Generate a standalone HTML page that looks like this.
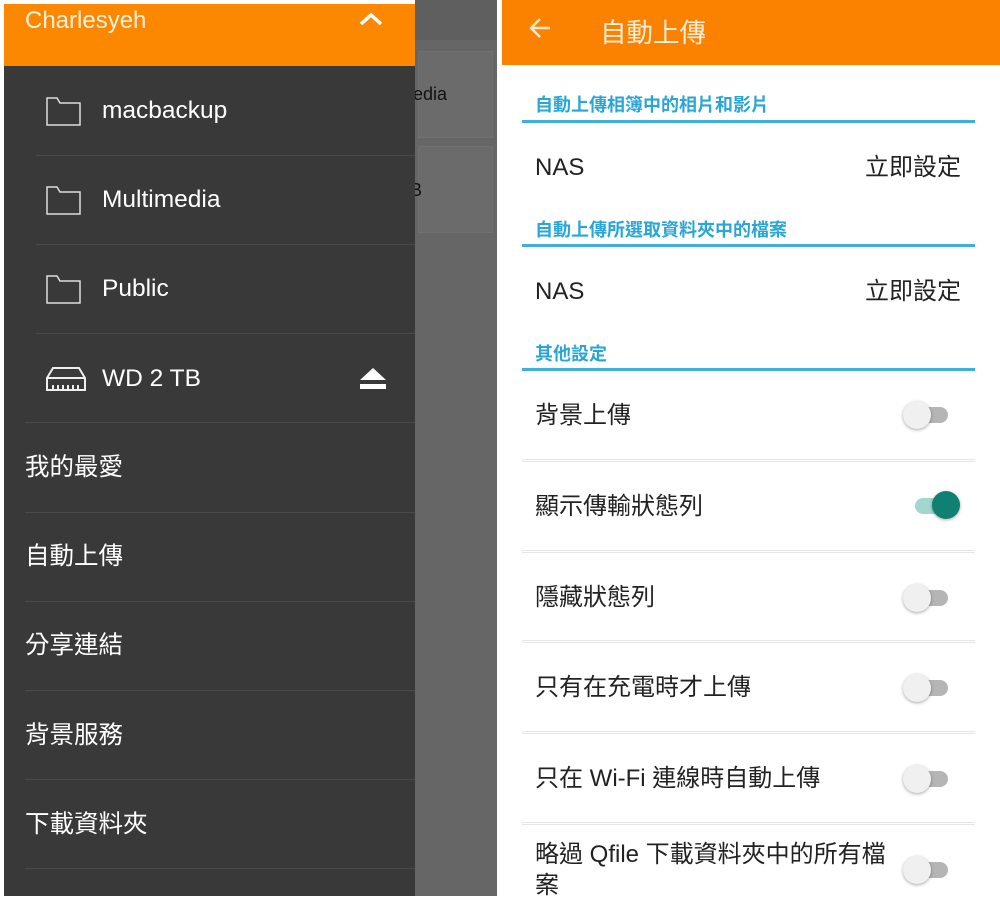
<!DOCTYPE html>
<html><head><meta charset="utf-8"><style>
*{margin:0;padding:0;box-sizing:border-box}
body{width:1000px;height:900px;background:#fff;position:relative;overflow:hidden;font-family:"Liberation Sans","Noto Sans CJK TC",sans-serif}
.a{position:absolute;white-space:nowrap}
.lt{color:#fff;font-size:24.5px;line-height:30px}
.sep{position:absolute;height:1px;background:#4a4a4a}
.bl{position:absolute;left:535px;color:#2aa6d6;font-size:18px;font-weight:bold;line-height:22px;white-space:nowrap}
.bline{position:absolute;left:522px;width:453px;height:3px;background:#3fb0dc}
.rt{position:absolute;left:535px;color:#222;font-size:24px;line-height:30px;white-space:nowrap}
.rsep{position:absolute;left:522px;width:453px;height:3px;border-top:1px solid #e6e6e6;border-bottom:1px solid #e6e6e6}
.tr{position:absolute;width:40px;height:16px;border-radius:8px;background:#b5b5b5;left:908px}
.kn{position:absolute;width:28px;height:28px;border-radius:50%;background:#f0f0f0;box-shadow:0 1px 3px rgba(0,0,0,.35);left:903px}
</style></head><body>
<div class="a" style="left:415px;top:0;width:82px;height:896px;background:#666"></div>
<div class="a" style="left:415px;top:0;width:82px;height:40px;background:#5f5f5f"></div>
<div class="a" style="left:418px;top:51px;width:75px;height:87px;background:#6b6b6b;border:1px solid #707070"></div>
<div class="a" style="left:418px;top:146px;width:75px;height:87px;background:#6b6b6b;border:1px solid #707070"></div>
<div class="a" style="left:413px;top:84px;color:#111;font-size:18px">edia</div>
<div class="a" style="left:410px;top:180px;color:#111;font-size:18px">B</div>
<div class="a" style="left:4px;top:4px;width:411px;height:892px;background:#393939"></div>
<div class="a" style="left:4px;top:4px;width:411px;height:62px;background:#fb8800"></div>
<div class="a" style="left:25px;top:7px;color:#fdf0dc;font-size:24px">Charlesyeh</div>
<svg class="a" style="left:358px;top:11px" width="26" height="16"><path d="M3 13 L13 4 L23 13" stroke="#fff" stroke-width="3.5" fill="none"/></svg>
<svg class="a" style="left:46px;top:97px" width="36" height="30"><path d="M1 1 H11 L14 6 H34 V28 H1 Z" stroke="#ddd" stroke-width="1.5" fill="none"/></svg>
<div class="a lt" style="left:102px;top:96px">macbackup</div>
<svg class="a" style="left:46px;top:186px" width="36" height="30"><path d="M1 1 H11 L14 6 H34 V28 H1 Z" stroke="#ddd" stroke-width="1.5" fill="none"/></svg>
<div class="a lt" style="left:102px;top:185px">Multimedia</div>
<svg class="a" style="left:46px;top:275px" width="36" height="30"><path d="M1 1 H11 L14 6 H34 V28 H1 Z" stroke="#ddd" stroke-width="1.5" fill="none"/></svg>
<div class="a lt" style="left:102px;top:274px">Public</div>
<svg class="a" style="left:45px;top:366px" width="42" height="26"><path d="M8 2 H34 L40 12 V24 H2 V12 Z M2 12 H40 M8 24 V19 M13 24 V19 M18 24 V19 M23 24 V19 M28 24 V19 M33 24 V19" stroke="#eee" stroke-width="2" fill="none"/></svg>
<div class="a lt" style="left:102px;top:364px">WD 2 TB</div>
<svg class="a" style="left:359px;top:367px" width="28" height="24"><path d="M14 1 L27 13 H1 Z" fill="#fff"/><rect x="1" y="17" width="26" height="5" fill="#fff"/></svg>
<div class="sep" style="left:36px;top:155px;width:379px"></div>
<div class="sep" style="left:36px;top:244px;width:379px"></div>
<div class="sep" style="left:36px;top:333px;width:379px"></div>
<div class="sep" style="left:25px;top:422px;width:390px"></div>
<div class="a lt" style="left:25px;top:453px">我的最愛</div>
<div class="sep" style="left:25px;top:512px;width:390px"></div>
<div class="a lt" style="left:25px;top:542px">自動上傳</div>
<div class="sep" style="left:25px;top:601px;width:390px"></div>
<div class="a lt" style="left:25px;top:631px">分享連結</div>
<div class="sep" style="left:25px;top:690px;width:390px"></div>
<div class="a lt" style="left:25px;top:721px">背景服務</div>
<div class="sep" style="left:25px;top:779px;width:390px"></div>
<div class="a lt" style="left:25px;top:810px">下載資料夾</div>
<div class="sep" style="left:25px;top:868px;width:390px"></div>

<div class="a" style="left:502px;top:0;width:498px;height:65px;background:#fb8200"></div>
<svg class="a" style="left:527px;top:16px" width="26" height="24"><path d="M23 12 H4 M13 3 L4 12 L13 21" stroke="#fde8cc" stroke-width="2.5" fill="none"/></svg>
<div class="a" style="left:600px;top:11px;color:#fdeed8;font-size:26.5px">自動上傳</div>
<div class="bl" style="top:94px">自動上傳相簿中的相片和影片</div>
<div class="bline" style="top:120px"></div>
<div class="rt" style="top:153px">NAS</div>
<div class="rt" style="top:153px;left:865px">立即設定</div>
<div class="bl" style="top:219px">自動上傳所選取資料夾中的檔案</div>
<div class="bline" style="top:244px"></div>
<div class="rt" style="top:277px">NAS</div>
<div class="rt" style="top:277px;left:865px">立即設定</div>
<div class="bl" style="top:343px">其他設定</div>
<div class="bline" style="top:368px"></div>
<div class="rt" style="top:401px">背景上傳</div>
<div class="tr" style="top:407px"></div><div class="kn" style="top:401px"></div>
<div class="rsep" style="top:459px"></div>
<div class="rt" style="top:492px">顯示傳輸狀態列</div>
<div class="tr" style="top:498px;left:915px;background:#a4d6d0"></div><div class="kn" style="top:491px;left:932px;background:#0f8173"></div>
<div class="rsep" style="top:550px"></div>
<div class="rt" style="top:583px">隱藏狀態列</div>
<div class="tr" style="top:590px"></div><div class="kn" style="top:584px"></div>
<div class="rsep" style="top:640px"></div>
<div class="rt" style="top:673px">只有在充電時才上傳</div>
<div class="tr" style="top:680px"></div><div class="kn" style="top:674px"></div>
<div class="rsep" style="top:731px"></div>
<div class="rt" style="top:764px">只在 Wi-Fi 連線時自動上傳</div>
<div class="tr" style="top:771px"></div><div class="kn" style="top:765px"></div>
<div class="rsep" style="top:822px"></div>
<div class="rt" style="top:840px">略過 Qfile 下載資料夾中的所有檔</div>
<div class="rt" style="top:871px">案</div>
<div class="tr" style="top:862px"></div><div class="kn" style="top:856px"></div>
</body></html>
